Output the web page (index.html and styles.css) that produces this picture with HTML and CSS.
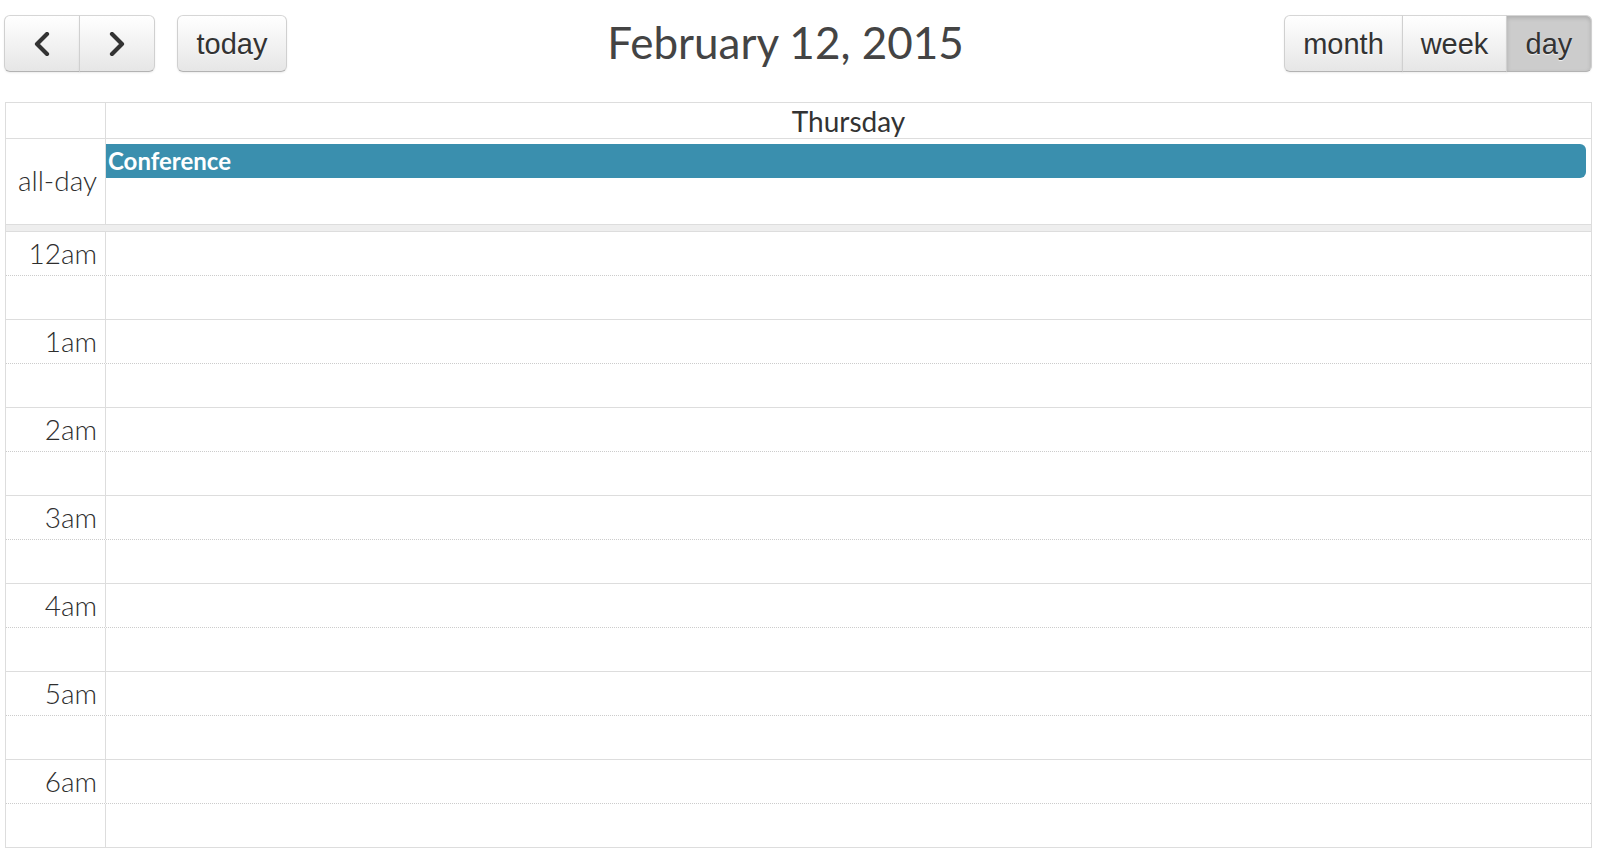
FILE: index.html
```html
<!DOCTYPE html>
<html>
<head>
<meta charset="utf-8">
<link rel="stylesheet" href="styles.css">
</head>
<body>
<div class="page">
  <div class="toolbar">
    <div class="tb-left">
      <div class="btn-group">
        <button class="btn btn-icon btn-first" aria-label="prev">
          <svg width="18" height="24" viewBox="0 0 18 24"><path d="M14 2 L4 12 L14 22" fill="none" stroke="#333" stroke-width="4.2" stroke-linecap="round" stroke-linejoin="round"/></svg>
        </button>
        <button class="btn btn-icon btn-last" aria-label="next">
          <svg width="18" height="24" viewBox="0 0 18 24"><path d="M4 2 L14 12 L4 22" fill="none" stroke="#333" stroke-width="4.2" stroke-linecap="round" stroke-linejoin="round"/></svg>
        </button>
      </div>
      <button class="btn btn-single">today</button>
    </div>
    <div class="tb-center"><h2 class="title">February 12, 2015</h2></div>
    <div class="tb-right">
      <div class="btn-group">
        <button class="btn btn-first btn-month">month</button>
        <button class="btn btn-week">week</button>
        <button class="btn btn-last btn-active">day</button>
      </div>
    </div>
  </div>

  <div class="cal">
    <div class="row head-row">
      <div class="axis"></div>
      <div class="col day-head">Thursday</div>
    </div>
    <div class="row allday-row">
      <div class="axis allday-label">all-day</div>
      <div class="col allday-col">
        <div class="event">Conference</div>
      </div>
    </div>
    <div class="divider"></div>
    <div class="slots">
      <div class="row slot major"><div class="axis time">12am</div><div class="col"></div></div>
      <div class="row slot minor"><div class="axis"></div><div class="col"></div></div>
      <div class="row slot major"><div class="axis time">1am</div><div class="col"></div></div>
      <div class="row slot minor"><div class="axis"></div><div class="col"></div></div>
      <div class="row slot major"><div class="axis time">2am</div><div class="col"></div></div>
      <div class="row slot minor"><div class="axis"></div><div class="col"></div></div>
      <div class="row slot major"><div class="axis time">3am</div><div class="col"></div></div>
      <div class="row slot minor"><div class="axis"></div><div class="col"></div></div>
      <div class="row slot major"><div class="axis time">4am</div><div class="col"></div></div>
      <div class="row slot minor"><div class="axis"></div><div class="col"></div></div>
      <div class="row slot major"><div class="axis time">5am</div><div class="col"></div></div>
      <div class="row slot minor"><div class="axis"></div><div class="col"></div></div>
      <div class="row slot major"><div class="axis time">6am</div><div class="col"></div></div>
      <div class="row slot minor last"><div class="axis"></div><div class="col"></div></div>
    </div>
  </div>
</div>
</body>
</html>
```

FILE: styles.css
```css
html, body {
  margin: 0;
  padding: 0;
  background: #fff;
  overflow: hidden;
}
body {
  font-family: "Lato", "Liberation Sans", sans-serif;
  color: #333;
}
.page {
  padding: 15px 8px 0 5px;
}
.toolbar {
  display: flex;
  align-items: flex-start;
  height: 56px;
  margin-bottom: 31px;
}
.tb-left {
  display: flex;
  gap: 22px;
  margin-left: -1px;
}
.tb-center {
  flex: 1;
  text-align: center;
}
.title {
  margin: 0;
  font-family: "Lato", sans-serif;
  font-weight: 400;
  font-size: 44px;
  line-height: 54px;
  color: #444;
}
.tb-right {
  display: flex;
}
.btn-group {
  display: flex;
}
.btn {
  box-sizing: border-box;
  height: 57px;
  margin: 0;
  padding: 2px 18px 0;
  border: 1px solid #c8c8c8;
  border-color: #d6d6d6 #d0d0d0 #b3b3b3;
  background: linear-gradient(#ffffff, #e6e6e6);
  box-shadow: inset 0 1px 0 rgba(255,255,255,.2), 0 1px 2px rgba(0,0,0,.08);
  font-family: "Liberation Sans", Arial, sans-serif;
  font-size: 29px;
  color: #333;
  text-shadow: 0 1px 1px rgba(255,255,255,.75);
  display: flex;
  align-items: center;
  justify-content: center;
  border-radius: 0;
}
.btn-single {
  border-radius: 6px;
  width: 110px;
}
.btn-first {
  border-radius: 6px 0 0 6px;
}
.btn-last {
  border-radius: 0 6px 6px 0;
  margin-left: -1px;
}
.btn-icon {
  width: 76px;
  padding: 0;
}
.btn-month {
  width: 119px;
}
.btn-week {
  width: 105px;
  margin-left: -1px;
}
.btn-active {
  width: 86px;
  background: #cccccc;
  box-shadow: inset 0 2px 4px rgba(0,0,0,.15), 0 1px 2px rgba(0,0,0,.05);
}

.cal {
  border: 1px solid #ddd;
  border-bottom: none;
}
.row {
  display: grid;
  grid-template-columns: 100px 1fr;
}
.axis {
  border-right: 1px solid #ddd;
}
.head-row {
  height: 35px;
  border-bottom: 1px solid #ddd;
}
.day-head {
  text-align: center;
  font-size: 28px;
  line-height: 37px;
  color: #333;
}
.allday-row {
  height: 85px;
}
.allday-label {
  display: flex;
  align-items: center;
  justify-content: flex-end;
  padding-right: 8px;
  padding-bottom: 3px;
  font-size: 28px;
  font-weight: 300;
  color: #2e2e2e;
}
.allday-col {
  padding: 5px 5px 0 0;
}
.event {
  height: 34px;
  background: #3a8fae;
  color: #fff;
  font-weight: 700;
  font-size: 24px;
  line-height: 33px;
  padding-left: 2px;
  border-radius: 0 6px 6px 0;
}
.divider {
  height: 6px;
  background: #eee;
  border-top: 1px solid #ddd;
  border-bottom: 1px solid #ddd;
}
.slot {
  height: 43px;
}
.slot.major {
  border-bottom: 1px dotted #ccc;
}
.slot.minor {
  border-bottom: 1px solid #ddd;
}
.time {
  text-align: right;
  padding-right: 8px;
  font-size: 28px;
  font-weight: 300;
  line-height: 34px;
  padding-top: 4px;
  color: #2e2e2e;
}
```
